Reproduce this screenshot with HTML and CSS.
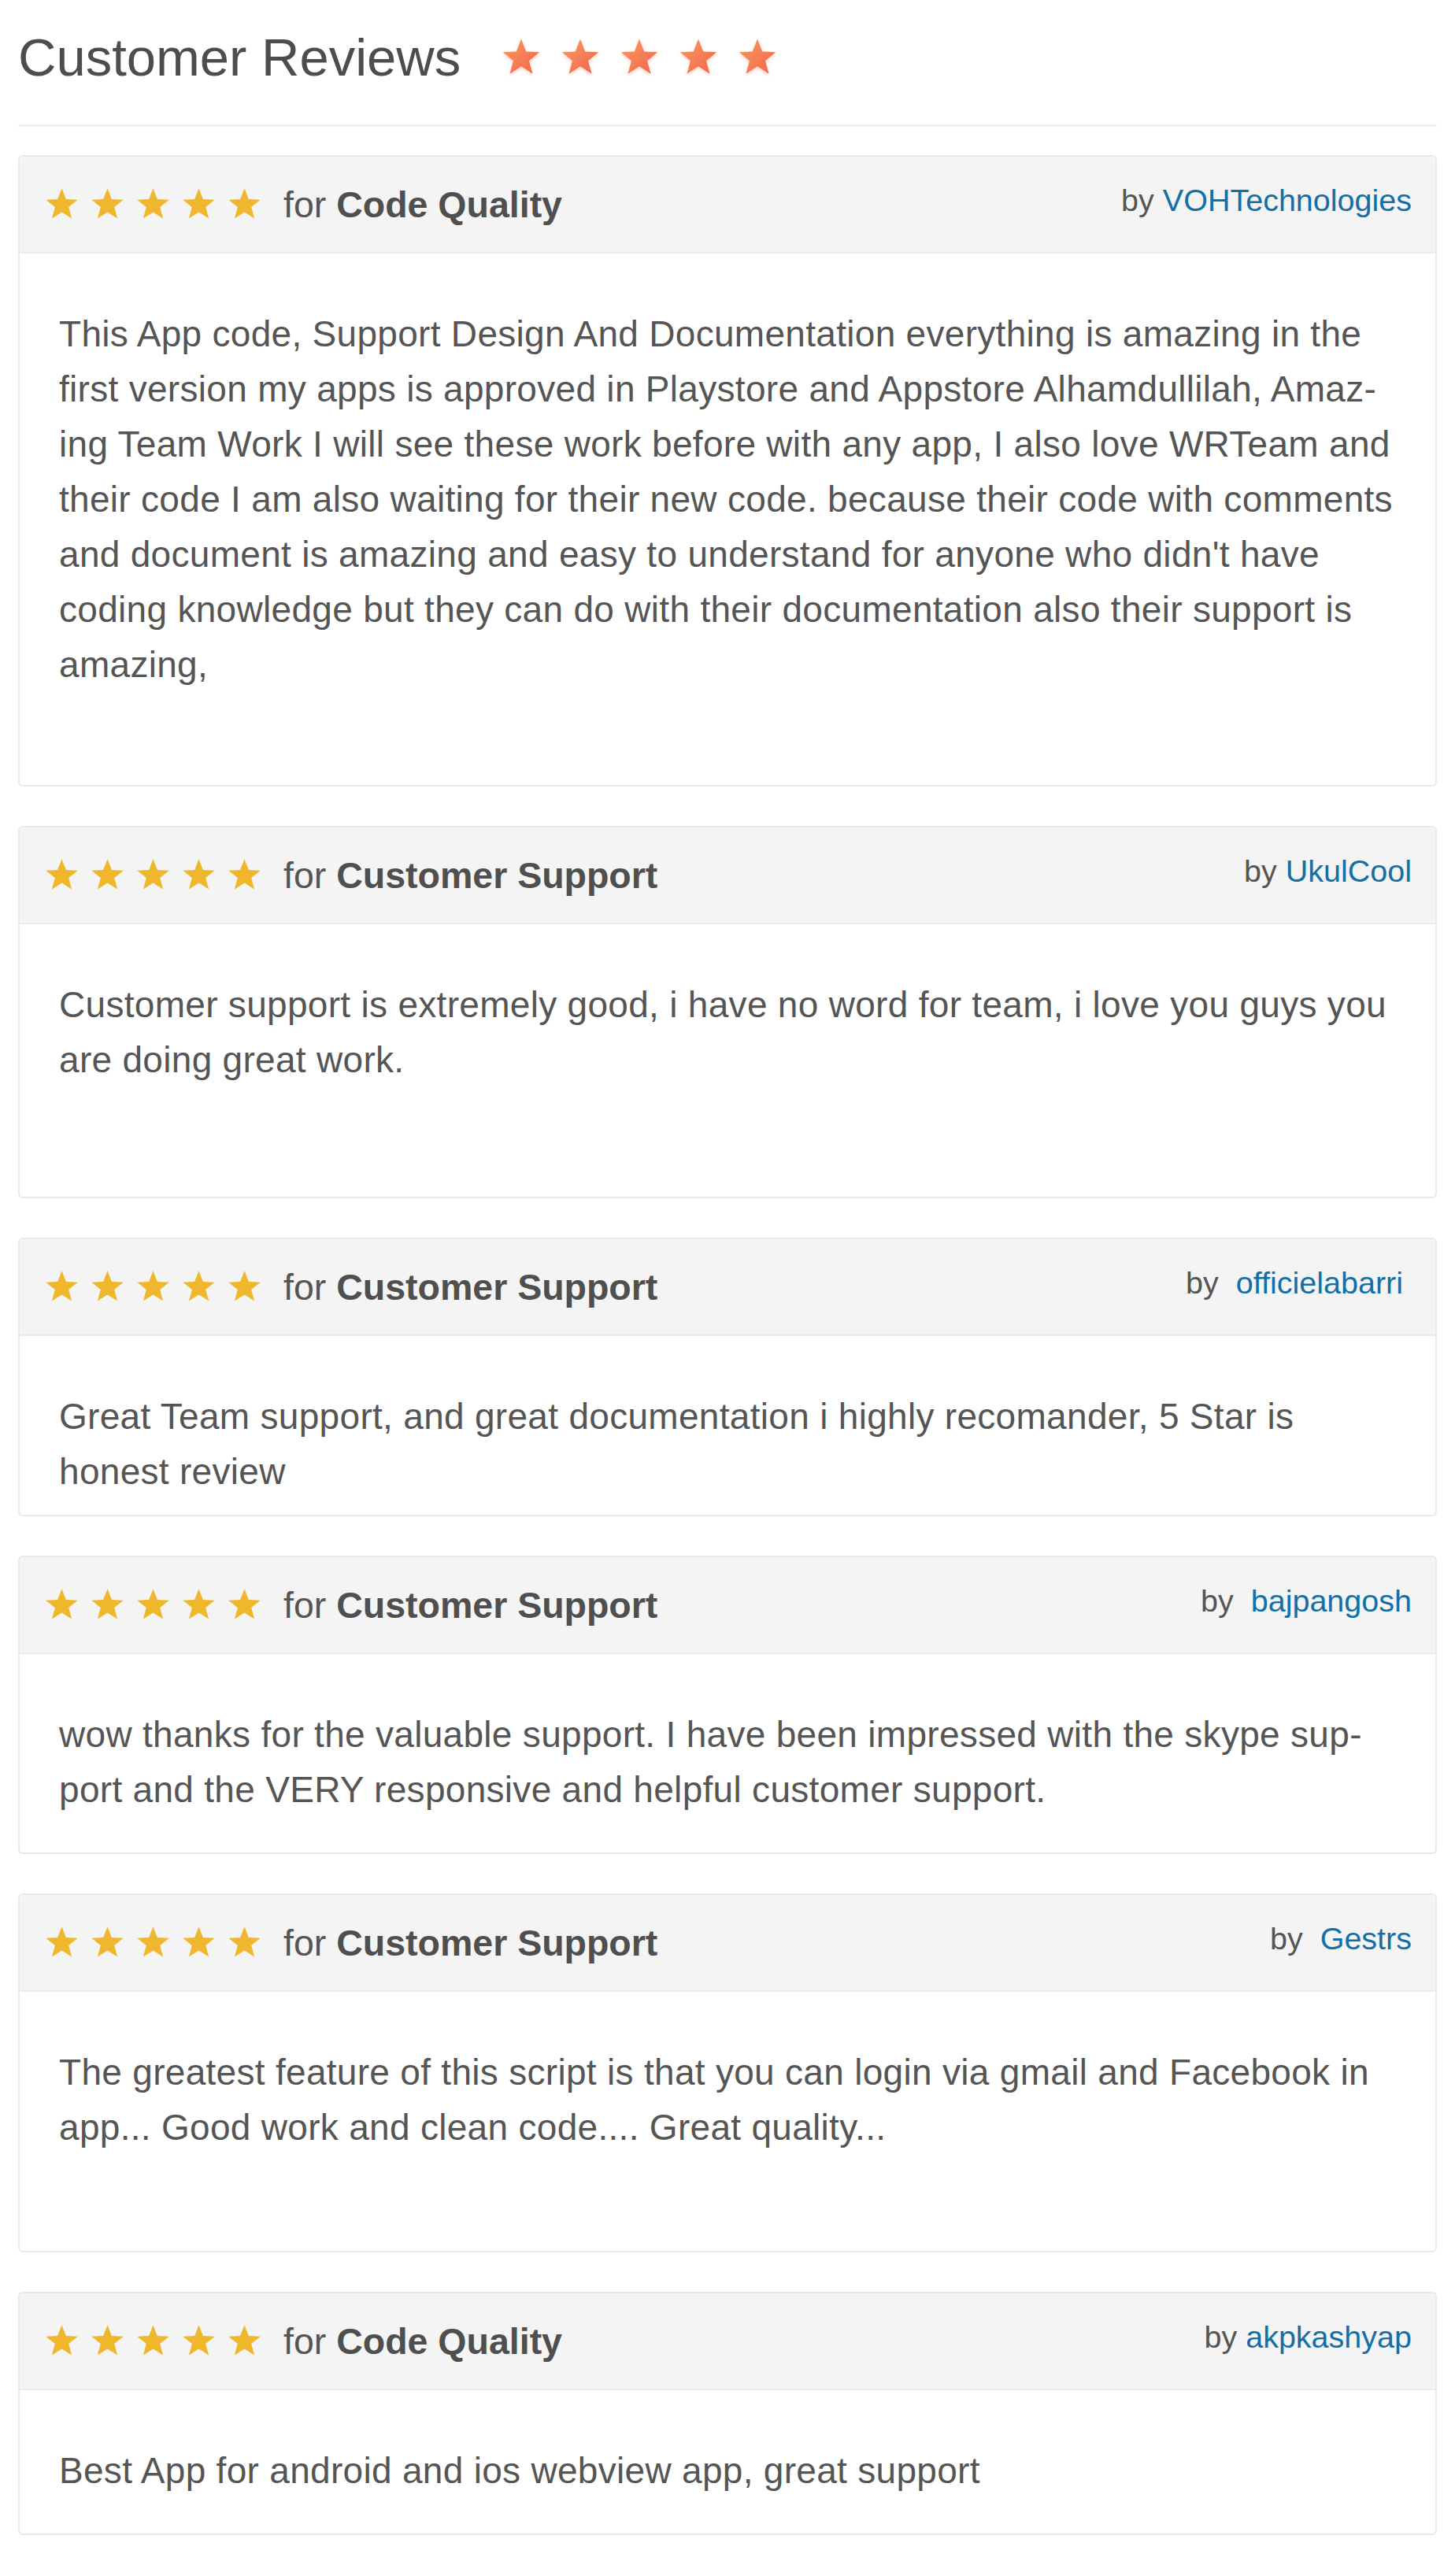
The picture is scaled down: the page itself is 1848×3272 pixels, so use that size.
FILE: index.html
```html
<!DOCTYPE html>
<html lang="en">
<head>
    <meta charset="UTF-8" />
    <meta name="viewport" content="width=device-width, initial-scale=1.0"/>
    <title>Customer Reviews</title>
    <link rel="stylesheet" href="styles.css">
</head>
<body>
    <!-- star shapes used everywhere -->
    <svg class="defs" aria-hidden="true">
        <defs>
            <linearGradient id="orangeStar" x1="0" y1="0" x2="1" y2="1">
                <stop offset="0" stop-color="#fb9a5c"/>
                <stop offset="1" stop-color="#f0654e"/>
            </linearGradient>
            <symbol id="star" viewBox="0 0 24 24">
                <path d="M12 1.6l2.75 7.1 7.6.35-5.9 4.8 2 7.35L12 17.05 5.55 21.2l2-7.35-5.9-4.8 7.6-.35z"/>
            </symbol>
        </defs>
    </svg>

    <div class="reviews">
        <h2 class="reviews-title">
            Customer Reviews
            <span class="title-stars">
                <svg><use href="#star"/></svg>
                <svg><use href="#star"/></svg>
                <svg><use href="#star"/></svg>
                <svg><use href="#star"/></svg>
                <svg><use href="#star"/></svg>
            </span>
        </h2>
        <hr class="divider">

        <div class="review">
            <div class="review-head">
                <div class="review-rating">
                    <span class="stars">
                        <svg><use href="#star"/></svg><svg><use href="#star"/></svg><svg><use href="#star"/></svg><svg><use href="#star"/></svg><svg><use href="#star"/></svg>
                    </span>
                    <span>for <b>Code Quality</b></span>
                </div>
                <div class="review-author">by <a href="#">VOHTechnologies</a></div>
            </div>
            <div class="review-body tail-md">
                This App code, Support Design And Documentation everything is amazing in the first version my apps is approved in Playstore and Appstore Alhamdullilah, Amaz&shy;ing Team Work I will see these work before with any app, I also love WRTeam and their code I am also waiting for their new code. because their code with comments and document is amazing and easy to understand for anyone who didn't have coding knowledge but they can do with their documentation also their support is amazing,
            </div>
        </div>

        <div class="review">
            <div class="review-head">
                <div class="review-rating">
                    <span class="stars">
                        <svg><use href="#star"/></svg><svg><use href="#star"/></svg><svg><use href="#star"/></svg><svg><use href="#star"/></svg><svg><use href="#star"/></svg>
                    </span>
                    <span>for <b>Customer Support</b></span>
                </div>
                <div class="review-author">by <a href="#">UkulCool</a></div>
            </div>
            <div class="review-body tail-xl">
                Customer support is extremely good, i have no word for team, i love you guys you are doing great work.
            </div>
        </div>

        <div class="review">
            <div class="review-head">
                <div class="review-rating">
                    <span class="stars">
                        <svg><use href="#star"/></svg><svg><use href="#star"/></svg><svg><use href="#star"/></svg><svg><use href="#star"/></svg><svg><use href="#star"/></svg>
                    </span>
                    <span>for <b>Customer Support</b></span>
                </div>
                <div class="review-author">by &nbsp;<a href="#">officielabarri</a>&nbsp;</div>
            </div>
            <div class="review-body">
                Great Team support, and great documentation i highly recomander, 5 Star is honest review
            </div>
        </div>

        <div class="review">
            <div class="review-head">
                <div class="review-rating">
                    <span class="stars">
                        <svg><use href="#star"/></svg><svg><use href="#star"/></svg><svg><use href="#star"/></svg><svg><use href="#star"/></svg><svg><use href="#star"/></svg>
                    </span>
                    <span>for <b>Customer Support</b></span>
                </div>
                <div class="review-author">by &nbsp;<a href="#">bajpangosh</a></div>
            </div>
            <div class="review-body tail-sm">
                wow thanks for the valuable support. I have been impressed with the skype sup&shy;port and the VERY responsive and helpful customer support.
            </div>
        </div>

        <div class="review">
            <div class="review-head">
                <div class="review-rating">
                    <span class="stars">
                        <svg><use href="#star"/></svg><svg><use href="#star"/></svg><svg><use href="#star"/></svg><svg><use href="#star"/></svg><svg><use href="#star"/></svg>
                    </span>
                    <span>for <b>Customer Support</b></span>
                </div>
                <div class="review-author">by &nbsp;<a href="#">Gestrs</a></div>
            </div>
            <div class="review-body tail-lg">
                The greatest feature of this script is that you can login via gmail and Facebook in app... Good work and clean code.... Great quality...
            </div>
        </div>

        <div class="review">
            <div class="review-head">
                <div class="review-rating">
                    <span class="stars">
                        <svg><use href="#star"/></svg><svg><use href="#star"/></svg><svg><use href="#star"/></svg><svg><use href="#star"/></svg><svg><use href="#star"/></svg>
                    </span>
                    <span>for <b>Code Quality</b></span>
                </div>
                <div class="review-author">by <a href="#">akpkashyap</a></div>
            </div>
            <div class="review-body tail-sm">
                Best App for android and ios webview app, great support
            </div>
        </div>
    </div>
</body>
</html>
```

FILE: styles.css
```css
body {
    margin: 0;
    background-color: #fff;
    font-family: "Liberation Sans", Arial, sans-serif;
    color: #555;
}
.defs {
    position: absolute;
    width: 0;
    height: 0;
}
.reviews {
    padding: 0 23px;
}
.reviews-title {
    display: flex;
    align-items: center;
    margin: 0;
    padding-top: 34px;
    height: 78px;
    font-size: 67px;
    font-weight: normal;
    line-height: 78px;
    color: #4d4d4d;
}
.title-stars {
    display: flex;
    gap: 21px;
    margin-left: 50px;
}
.title-stars svg {
    width: 54px;
    height: 54px;
    fill: url(#orangeStar);
    filter: drop-shadow(0 2px 2px rgba(240, 110, 90, 0.35));
}
.divider {
    margin: 46px 0 36px;
    border: none;
    border-top: 3px solid #efefef;
}
.review {
    margin-bottom: 50px;
    border: 2px solid #e9e9e9;
    border-radius: 6px;
}
.review-head {
    display: flex;
    align-items: center;
    justify-content: space-between;
    height: 121px;
    padding: 0 30px 0 30px;
    background-color: #f4f4f4;
    border-bottom: 2px solid #ebebeb;
    border-radius: 6px 6px 0 0;
}
.review-rating {
    display: flex;
    align-items: center;
    gap: 26px;
    font-size: 46.5px;
    color: #555;
}
.review-rating b {
    color: #4f4f4f;
}
.stars {
    display: flex;
    gap: 11px;
}
.stars svg {
    width: 47px;
    height: 47px;
    fill: #f0b72c;
}
.review-author {
    margin-bottom: 10px;
    font-size: 39.5px;
    color: #555;
    white-space: pre;
}
.review-author a {
    color: #136fa6;
    text-decoration: none;
}
.review-body {
    padding: 67px 50px 20px;
    font-size: 46px;
    letter-spacing: 0.3px;
    line-height: 70px;
}
.review-body.tail-sm {
    padding-bottom: 45px;
}
.review-body.tail-md {
    padding-bottom: 118px;
}
.review-body.tail-lg {
    padding-bottom: 122px;
}
.review-body.tail-xl {
    padding-bottom: 139px;
}
```
